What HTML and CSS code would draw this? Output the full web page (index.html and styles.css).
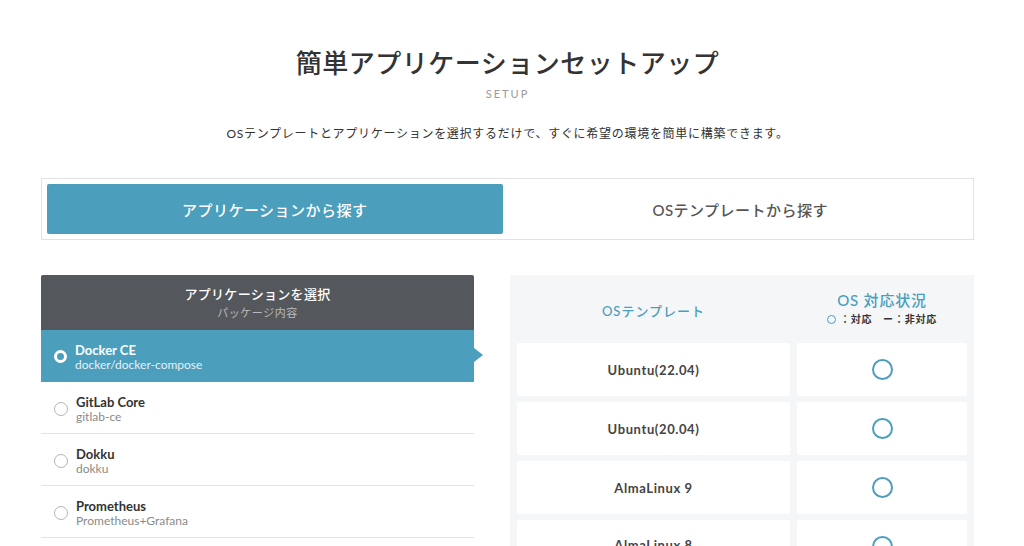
FILE: index.html
```html
<!DOCTYPE html>
<html lang="ja">
<head>
<meta charset="utf-8">
<title>簡単アプリケーションセットアップ</title>
<link rel="stylesheet" href="styles.css">
</head>
<body>
<div class="page">
  <h1 class="title">簡単アプリケーションセットアップ</h1>
  <p class="subtitle">SETUP</p>
  <p class="lead">OSテンプレートとアプリケーションを選択するだけで、すぐに希望の環境を簡単に構築できます。</p>

  <div class="tabs">
    <div class="tab tab-active">アプリケーションから探す</div>
    <div class="tab">OSテンプレートから探す</div>
  </div>

  <div class="panels">
    <div class="apps">
      <div class="apps-head">
        <div class="apps-head-title">アプリケーションを選択</div>
        <div class="apps-head-sub">パッケージ内容</div>
      </div>
      <div class="app app-selected">
        <span class="radio"></span>
        <div class="app-text">
          <div class="app-name">Docker CE</div>
          <div class="app-pkg">docker/docker-compose</div>
        </div>
      </div>
      <div class="app">
        <span class="radio"></span>
        <div class="app-text">
          <div class="app-name">GitLab Core</div>
          <div class="app-pkg">gitlab-ce</div>
        </div>
      </div>
      <div class="app">
        <span class="radio"></span>
        <div class="app-text">
          <div class="app-name">Dokku</div>
          <div class="app-pkg">dokku</div>
        </div>
      </div>
      <div class="app">
        <span class="radio"></span>
        <div class="app-text">
          <div class="app-name">Prometheus</div>
          <div class="app-pkg">Prometheus+Grafana</div>
        </div>
      </div>
    </div>

    <div class="os">
      <div class="os-head os-head-left">OSテンプレート</div>
      <div class="os-head os-head-right">
        <div class="os-head-title">OS 対応状況</div>
        <div class="legend"><span class="legend-mark"></span>：対応　ー：非対応</div>
      </div>

      <div class="cell cell-name">Ubuntu(22.04)</div>
      <div class="cell cell-mark"><span class="ok"></span></div>
      <div class="cell cell-name">Ubuntu(20.04)</div>
      <div class="cell cell-mark"><span class="ok"></span></div>
      <div class="cell cell-name">AlmaLinux 9</div>
      <div class="cell cell-mark"><span class="ok"></span></div>
      <div class="cell cell-name cell-cut">AlmaLinux 8</div>
      <div class="cell cell-mark"><span class="ok"></span></div>
    </div>
  </div>
</div>
</body>
</html>
```

FILE: styles.css
```css
html, body {
  margin: 0;
  padding: 0;
  background: #ffffff;
  overflow: hidden;
}

body {
  font-family: Lato, "Noto Sans CJK JP", sans-serif;
  color: #333333;
}

.page {
  width: 933px;
  margin-left: 41px;
  padding-top: 44px;
}

.title {
  margin: 0;
  text-align: center;
  font-family: "Noto Sans CJK JP", sans-serif;
  font-weight: 500;
  font-size: 26px;
  line-height: 36px;
  letter-spacing: 0.5px;
  color: #333333;
}

.subtitle {
  margin: 6px 0 0;
  text-align: center;
  font-size: 11px;
  line-height: 16px;
  letter-spacing: 2px;
  color: #9a9a9a;
}

.lead {
  margin: 22px 0 0;
  text-align: center;
  font-size: 12px;
  line-height: 20px;
  letter-spacing: 0.72px;
  color: #333333;
}

.tabs {
  margin-top: 34px;
  border: 1px solid #e2e2e2;
  padding: 5px;
  display: grid;
  grid-template-columns: 1fr 1fr;
  column-gap: 10px;
}

.tab {
  height: 50px;
  display: flex;
  align-items: center;
  justify-content: center;
  font-size: 15px;
  font-weight: 500;
  letter-spacing: 0.5px;
  color: #555555;
  border-radius: 2px;
}

.tab-active {
  background: #4b9ebc;
  color: #ffffff;
}

.panels {
  margin-top: 35px;
  display: flex;
  gap: 36px;
}

.apps {
  width: 433px;
  flex: none;
}

.apps-head {
  height: 55px;
  background: #54575b;
  border-radius: 2px 2px 0 0;
  display: flex;
  flex-direction: column;
  align-items: center;
  justify-content: center;
  gap: 2px;
  padding-top: 1px;
  box-sizing: border-box;
}

.apps-head-title {
  color: #ffffff;
  font-size: 13px;
  font-weight: 500;
  line-height: 17px;
  letter-spacing: 0.3px;
}

.apps-head-sub {
  color: #b9babc;
  font-size: 11px;
  line-height: 16px;
  letter-spacing: 0.5px;
}

.app {
  position: relative;
  height: 51px;
  border-bottom: 1px solid #e3e3e3;
  display: flex;
  align-items: center;
  gap: 8px;
  padding-left: 13px;
}

.app-selected {
  background: #4b9ebc;
  border-bottom-color: #4b9ebc;
}

.app-selected::after {
  content: "";
  position: absolute;
  right: -9px;
  top: 18px;
  border-top: 7px solid transparent;
  border-bottom: 7px solid transparent;
  border-left: 9px solid #4b9ebc;
}

.radio {
  width: 12px;
  height: 12px;
  border: 1px solid #b3b3b3;
  border-radius: 50%;
  background: #ffffff;
  flex: none;
  margin-top: 2px;
}

.app-selected .radio {
  width: 7px;
  height: 7px;
  border: 3px solid #ffffff;
  background: #4b9ebc;
}

.app-text {
  display: flex;
  flex-direction: column;
  padding-top: 2px;
}

.app-name {
  font-size: 13px;
  font-weight: 700;
  line-height: 16px;
  color: #333333;
}

.app-pkg {
  font-size: 12px;
  line-height: 14px;
  color: #8a8a8a;
}

.app-selected .app-name {
  color: #ffffff;
}

.app-selected .app-pkg {
  color: #e6f1f6;
}

.os {
  flex: 1;
  background: #f4f6f8;
  padding: 0 7px 20px;
  display: grid;
  grid-template-columns: 273px 1fr;
  column-gap: 7px;
  row-gap: 6px;
  grid-auto-rows: 53px;
  grid-template-rows: 62px;
}

.os-head {
  display: flex;
  flex-direction: column;
  align-items: center;
  justify-content: center;
  color: #4b9ebc;
}

.os-head-left {
  font-size: 13px;
  font-weight: 500;
  letter-spacing: 1px;
  padding-top: 8px;
}

.os-head-title {
  font-size: 15px;
  font-weight: 500;
  line-height: 20px;
  letter-spacing: 0.8px;
  padding-top: 4px;
}

.legend {
  display: flex;
  align-items: center;
  margin-top: 2px;
  font-size: 10px;
  font-weight: 700;
  line-height: 14px;
  color: #333333;
  letter-spacing: 0.8px;
}

.legend-mark {
  width: 7px;
  height: 7px;
  border: 1.5px solid #4b9ebc;
  border-radius: 50%;
  margin-right: 4px;
}

.cell {
  background: #ffffff;
  border-radius: 2px;
  display: flex;
  align-items: center;
  justify-content: center;
}

.cell-name {
  font-size: 13px;
  font-weight: 700;
  letter-spacing: 0.6px;
  color: #444444;
}

.cell-cut {
  align-items: flex-start;
  padding-top: 17px;
}

.ok {
  width: 17px;
  height: 17px;
  border: 2px solid #4b9ebc;
  border-radius: 50%;
}
```
